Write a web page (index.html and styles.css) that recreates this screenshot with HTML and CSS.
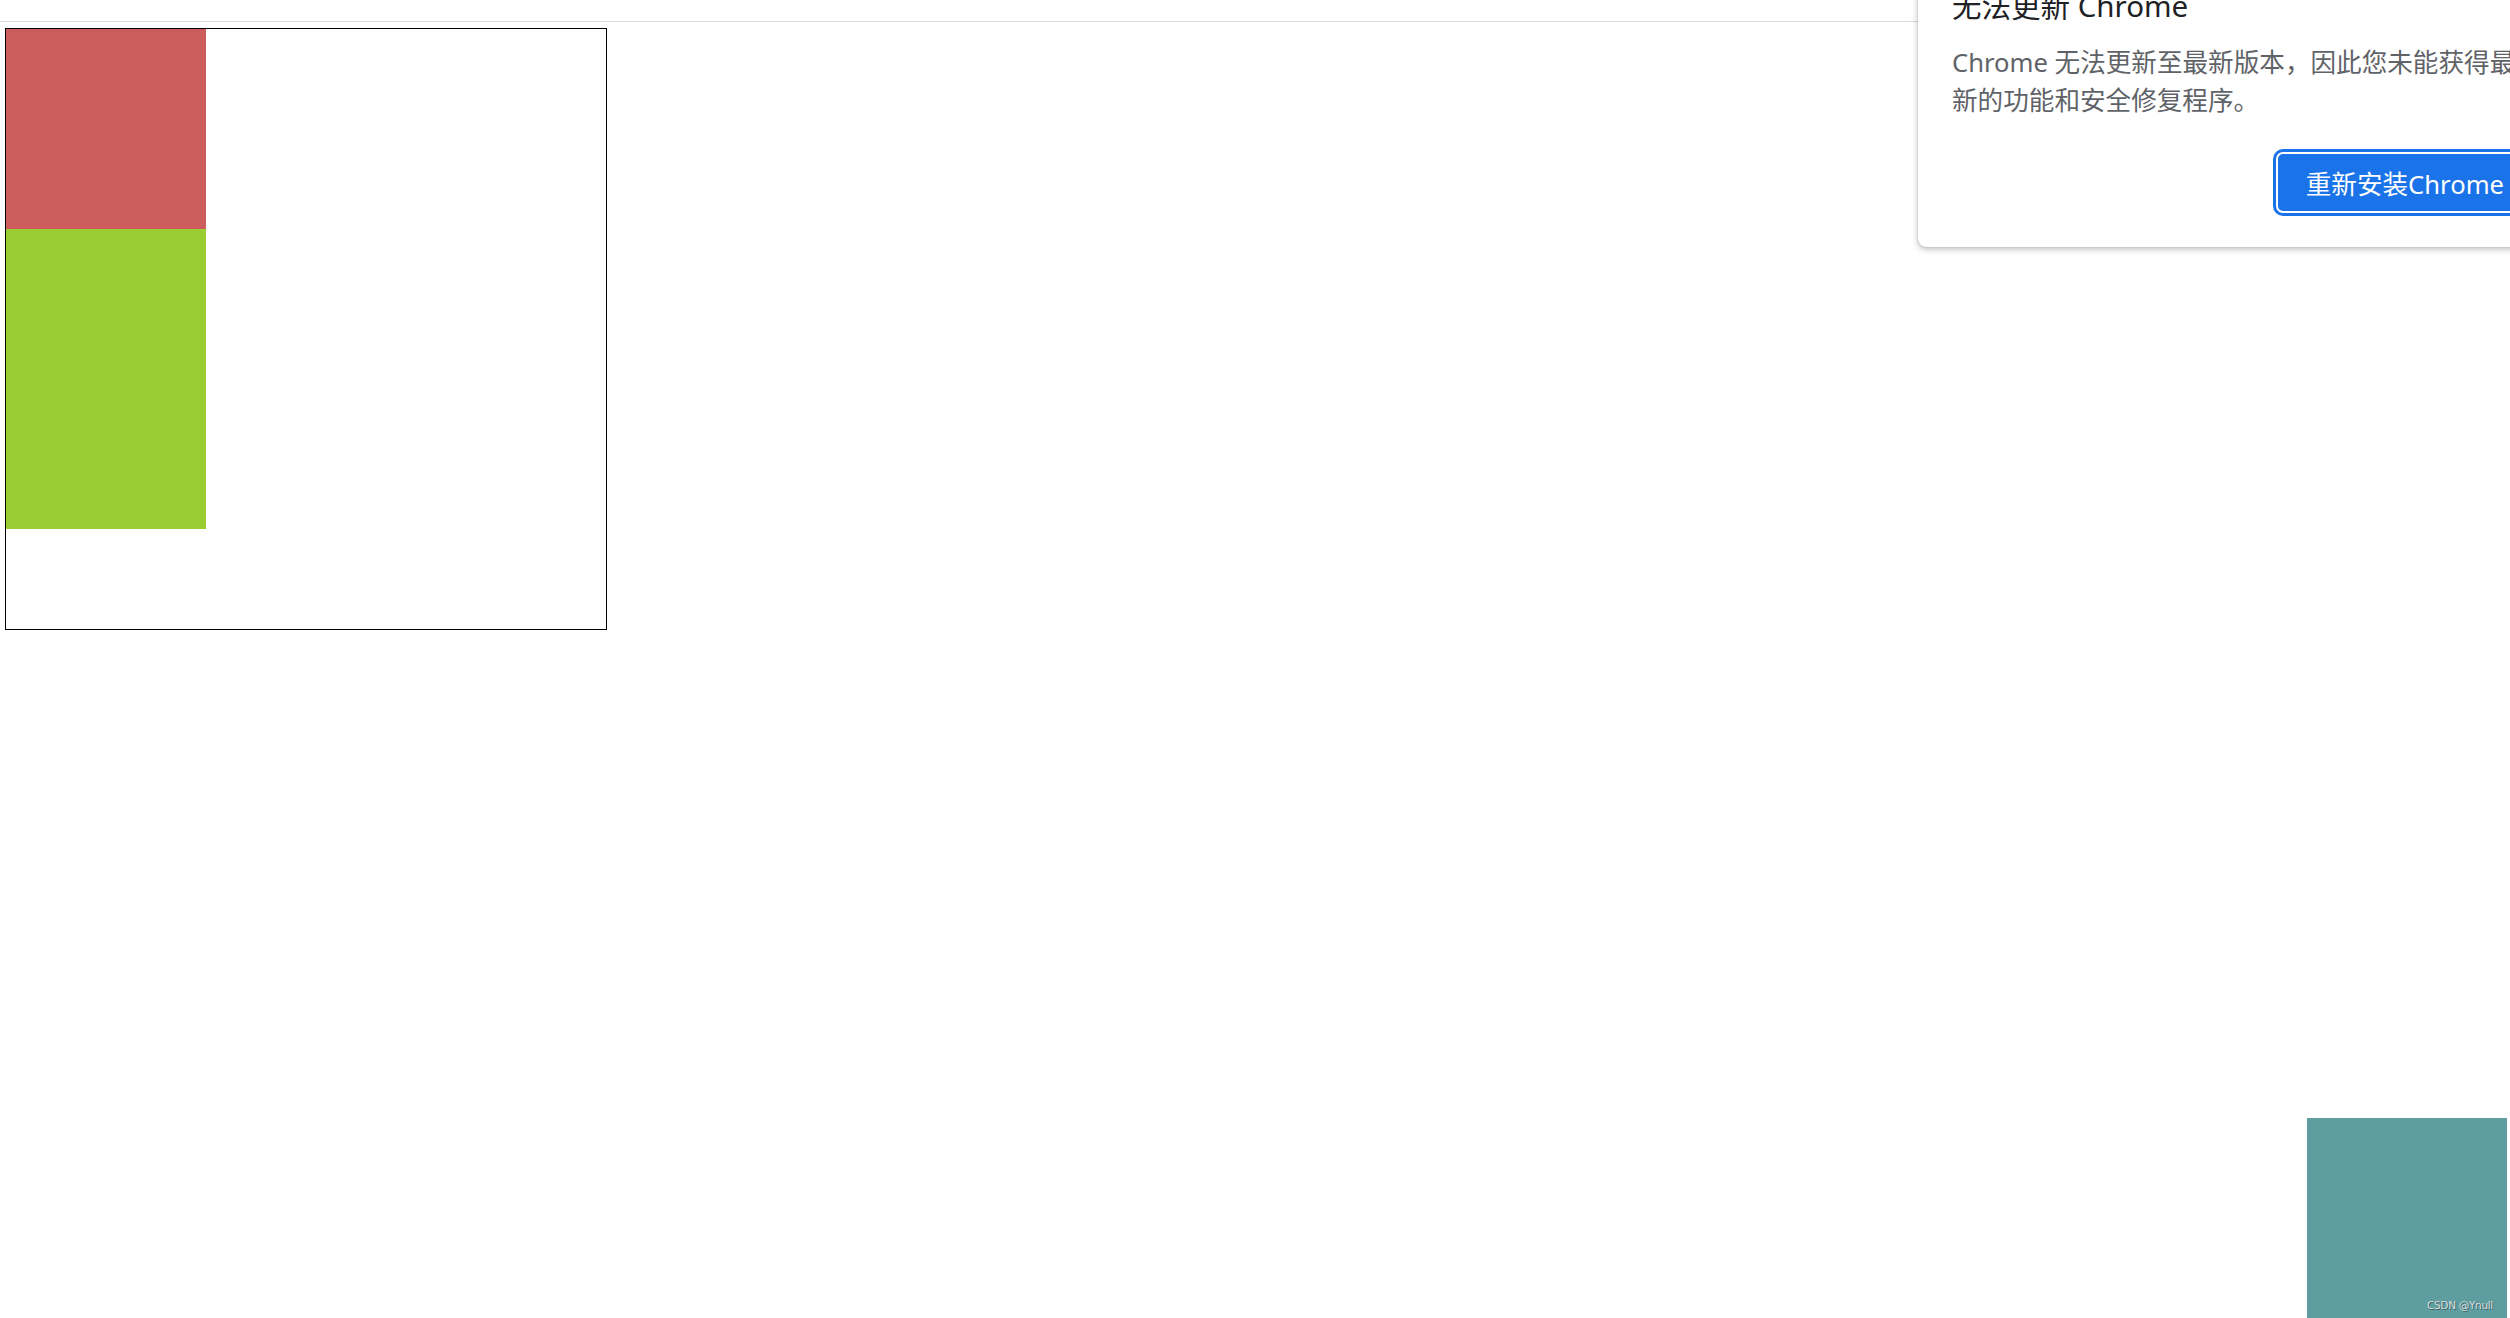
FILE: index.html
```html
<!DOCTYPE html>
<html lang="zh-CN">
<head>
<meta charset="utf-8">
<title>demo</title>
<link rel="stylesheet" href="styles.css">
</head>
<body>
<div class="toolbar"></div>
<main class="content">
  <div class="box">
    <div class="item red"></div>
    <div class="item green"></div>
  </div>
</main>

<div class="bubble">
  <div class="bubble-title">无法更新 Chrome</div>
  <div class="bubble-body">Chrome 无法更新至最新版本，因此您未能获得最<br>新的功能和安全修复程序。</div>
  <div class="bubble-actions">
    <button class="btn-primary">重新安装Chrome</button>
  </div>
</div>

<div class="fixed-square">
  <span class="watermark">CSDN @Ynull</span>
</div>
</body>
</html>
```

FILE: styles.css
```css
html, body {
  margin: 0;
  padding: 0;
  background: #ffffff;
  overflow: hidden;
  height: 100%;
}

body {
  font-family: "Noto Sans", "Noto Sans CJK SC", sans-serif;
}

.toolbar {
  height: 21px;
  border-bottom: 1px solid #dadada;
}

.content {
  padding: 6px 0 0 5px;
}

.box {
  width: 600px;
  height: 600px;
  border: 1px solid #000000;
}

.item {
  width: 200px;
}

.red {
  height: 200px;
  background: #cd5c5c;
}

.green {
  height: 300px;
  background: #9acd32;
}

/* Chrome update bubble */
.bubble {
  position: absolute;
  top: -24px;
  left: 1918px;
  width: 637px;
  box-sizing: border-box;
  padding: 12px 23px 36px 34px;
  background: #ffffff;
  border-radius: 8px;
  box-shadow: 0 2px 6px rgba(0, 0, 0, 0.28), 0 0 1px rgba(0, 0, 0, 0.35);
  font-family: "Noto Sans", "Noto Sans CJK SC", sans-serif;
  white-space: nowrap;
}

.bubble-title {
  font-size: 29.5px;
  line-height: 36px;
  color: #202124;
}

.bubble-body {
  margin-top: 20px;
  font-size: 25.6px;
  line-height: 38px;
  color: #5f6368;
}

.bubble-actions {
  display: flex;
  justify-content: flex-end;
  margin-top: 34px;
}

.btn-primary {
  height: 57px;
  padding: 0 28px;
  border: none;
  border-radius: 5px;
  background: #1a73e8;
  color: #ffffff;
  font-family: "Noto Sans", "Noto Sans CJK SC", sans-serif;
  font-size: 25.6px;
  box-shadow: 0 0 0 2px #ffffff, 0 0 0 5px #1a73e8;
}

/* fixed square bottom right */
.fixed-square {
  position: fixed;
  right: 3px;
  bottom: 0;
  width: 200px;
  height: 200px;
  background: #5f9ea0;
}

.watermark {
  position: absolute;
  right: 14px;
  bottom: 7px;
  font-family: "DejaVu Sans", sans-serif;
  font-size: 10.5px;
  letter-spacing: -0.3px;
  color: #d9dcdc;
  text-shadow: 1px 1px 0 rgba(40, 60, 60, 0.6);
}
```
